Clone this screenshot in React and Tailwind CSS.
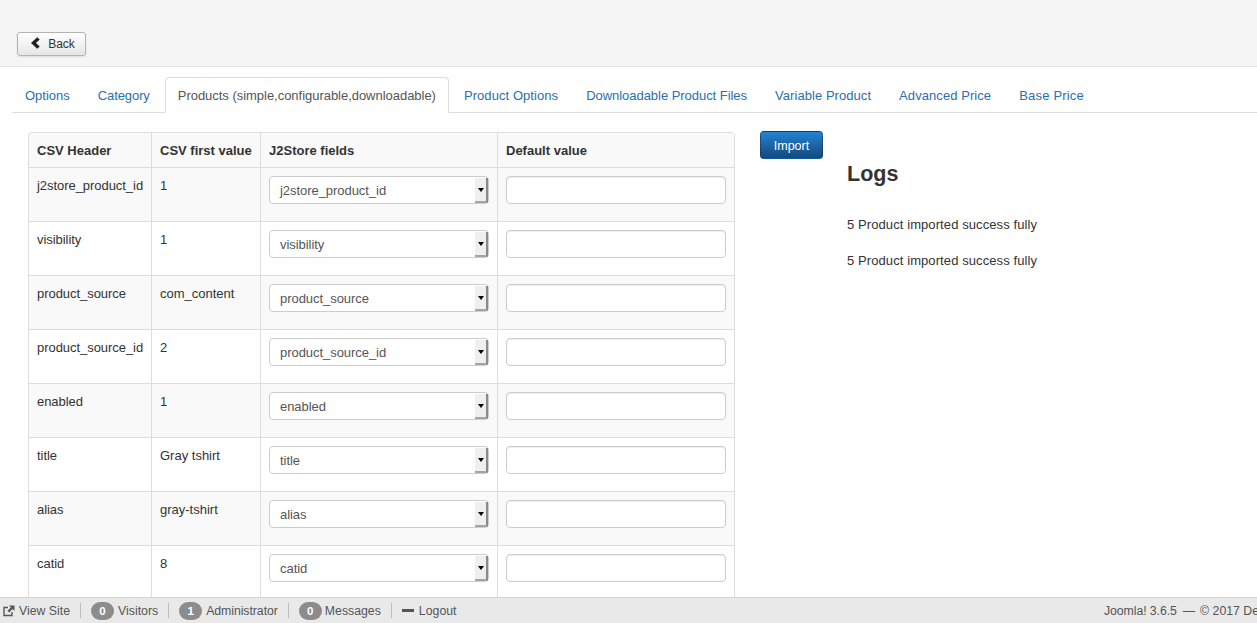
const tabs = [
  { label: "Options", cls: "" },
  { label: "Category", cls: "tracking-[-0.1px]" },
  { label: "Products (simple,configurable,downloadable)", cls: "tracking-[-0.03px]" },
  { label: "Product Options", cls: "tracking-[0.07px]" },
  { label: "Downloadable Product Files", cls: "tracking-[-0.04px]" },
  { label: "Variable Product", cls: "tracking-[0.06px]" },
  { label: "Advanced Price", cls: "tracking-[0.07px]" },
  { label: "Base Price", cls: "tracking-[0.2px]" },
];

const rows = [
  ["j2store_product_id", "1"],
  ["visibility", "1"],
  ["product_source", "com_content"],
  ["product_source_id", "2"],
  ["enabled", "1"],
  ["title", "Gray tshirt"],
  ["alias", "gray-tshirt"],
  ["catid", "8"],
];

function FakeSelect({ value }) {
  return (
    <div className="h-[28px] w-[220px] flex items-center bg-white border border-[#ccc] rounded-[4px] pl-[10px] text-[#555]">
      <span className="flex-1 pt-px tracking-[-0.05px]">{value}</span>
      <span className="h-[25px] w-[13px] mt-px flex items-center justify-center bg-[#efefef] border-r-2 border-b-2 border-r-[#8a8a8a] border-b-[#a5a5a5]">
        <span className="w-0 h-0 border-x-[3.5px] border-x-transparent border-t-[4px] border-t-black" />
      </span>
    </div>
  );
}

function Badge({ n }) {
  return (
    <span className="w-[23px] h-[18px] rounded-[9px] bg-[#8c8c8c] text-white text-[11.5px] font-bold flex items-center justify-center">
      {n}
    </span>
  );
}

function Sep() {
  return <span className="w-px h-[15px] bg-[#bdbdbd] mx-[10px]" />;
}

export default function App() {
  return (
    <div className="h-screen flex flex-col overflow-hidden bg-white text-[13px] leading-[18px] text-[#333] font-['Liberation_Sans',Arial,sans-serif]">
      {/* toolbar */}
      <div className="h-[67px] shrink-0 bg-[#f5f5f5] border-b border-[#e3e3e3] pl-[17px] pt-[32px]">
        <button className="h-[24px] w-[69px] flex items-center justify-center gap-[8px] pl-[2px] rounded-[3px] border border-[#b3b3b3] bg-gradient-to-b from-white to-[#e6e6e6] shadow-[0_1px_2px_rgba(0,0,0,0.1)] text-[#333] text-[12px]">
          <svg width="10" height="12" viewBox="0 0 10 12" className="-mt-[2px]">
            <path d="M7.2 0.3 L9.7 2.6 L6 6 L9.7 9.4 L7.2 11.7 L1 6 Z" fill="#222" />
          </svg>
          <span>Back</span>
        </button>
      </div>

      {/* tabs */}
      <div className="ml-[12px] mt-[10px] flex border-b border-[#ddd] h-[36px] shrink-0">
        {tabs.map((t, i) => (
          <a
            key={t.label}
            className={
              i === 2
                ? `h-[36px] mr-[2px] px-[12px] pt-[2px] border border-[#ddd] border-b-white rounded-t-[4px] bg-white text-[#555] flex items-center ${t.cls}`
                : `h-[35px] mr-[2px] px-[13px] pt-[2px] text-[#2a6fb0] flex items-center ${t.cls}`
            }
          >
            {t.label}
          </a>
        ))}
      </div>

      {/* content */}
      <div className="flex-1 min-h-0 overflow-hidden flex pl-[28px] pt-[19px] items-start">
        <table className="w-[706px] shrink-0 table-fixed border-separate border-spacing-0 border border-l-0 border-[#ddd] rounded-[4px]">
          <colgroup>
            <col className="w-[123px]" />
            <col className="w-[109px]" />
            <col className="w-[237px]" />
            <col className="w-[237px]" />
          </colgroup>
          <thead>
            <tr className="h-[34px] bg-[#f9f9f9] text-left">
              {["CSV Header", "CSV first value", "J2Store fields", "Default value"].map((h, i) => (
                <th
                  key={h}
                  className={
                    i === 0
                      ? "border-l border-[#ddd] px-[8px] pt-[2px] font-bold rounded-tl-[4px] whitespace-nowrap"
                      : "border-l border-[#ddd] px-[8px] pt-[2px] font-bold whitespace-nowrap"
                  }
                >
                  {h}
                </th>
              ))}
            </tr>
          </thead>
          <tbody>
            {rows.map(([name, first], i) => (
              <tr key={name} className={i % 2 === 0 ? "bg-[#f9f9f9] h-[54px]" : "bg-white h-[54px]"}>
                <td className="border-l border-t border-[#ddd] px-[8px] pt-[9px] align-top whitespace-nowrap tracking-[-0.05px]">{name}</td>
                <td className="border-l border-t border-[#ddd] px-[8px] pt-[9px] align-top whitespace-nowrap">{first}</td>
                <td className="border-l border-t border-[#ddd] px-[8px] pt-[8px] align-top">
                  <FakeSelect value={name} />
                </td>
                <td className="border-l border-t border-[#ddd] px-[8px] pt-[8px] align-top">
                  <input className="block h-[28px] w-[220px] bg-white border border-[#ccc] rounded-[4px] shadow-[inset_0_1px_1px_rgba(0,0,0,0.075)]" />
                </td>
              </tr>
            ))}
          </tbody>
        </table>

        <button className="ml-[25px] -mt-px h-[28px] w-[63px] shrink-0 pt-px rounded-[4px] border border-dotted border-[#0b2f52] bg-gradient-to-b from-[#2384d3] to-[#15497c] text-white text-[12.5px]">
          Import
        </button>

        <div className="ml-[24px]">
          <h2 className="mt-[29px] text-[21.5px] leading-[27px] font-bold text-[#333]">Logs</h2>
          <p className="mt-[28px] tracking-[0.09px] text-[#333]">5 Product imported success fully</p>
          <p className="mt-[18px] tracking-[0.09px] text-[#333]">5 Product imported success fully</p>
        </div>
      </div>

      {/* status bar */}
      <div className="h-[26px] shrink-0 flex items-center overflow-hidden bg-[#e9e9e9] border-t border-[#d4d4d4] text-[#555] text-[12.3px] whitespace-nowrap">
        <div className="w-[1104px] shrink-0 flex items-center pl-[3px]">
          <svg width="12" height="12" viewBox="0 0 12 12" className="mr-[4px]" fill="none">
            <path d="M5 2.5 H1 V10.5 H9 V7" stroke="#555" strokeWidth="1.4" />
            <path d="M6 0.5 H11.5 V6 L9.6 4.1 L6.2 7.5 L4.5 5.8 L7.9 2.4 Z" fill="#555" />
          </svg>
          <span className="pt-px">View Site</span>
          <Sep />
          <Badge n="0" />
          <span className="ml-[4px] pt-px">Visitors</span>
          <Sep />
          <Badge n="1" />
          <span className="ml-[4px] pt-px tracking-[-0.06px]">Administrator</span>
          <Sep />
          <Badge n="0" />
          <span className="ml-[3px] pt-px">Messages</span>
          <Sep />
          <span className="w-[12px] h-[3px] bg-[#555] mr-[5px]" />
          <span className="pt-px">Logout</span>
        </div>
        <span className="shrink-0 pt-px">
          <span className="tracking-[-0.08px]">Joomla! 3.6.5</span>
          <span className="ml-[6px] mr-[5px]">—</span>
          <span>© 2017 Demo</span>
        </span>
      </div>
    </div>
  );
}
